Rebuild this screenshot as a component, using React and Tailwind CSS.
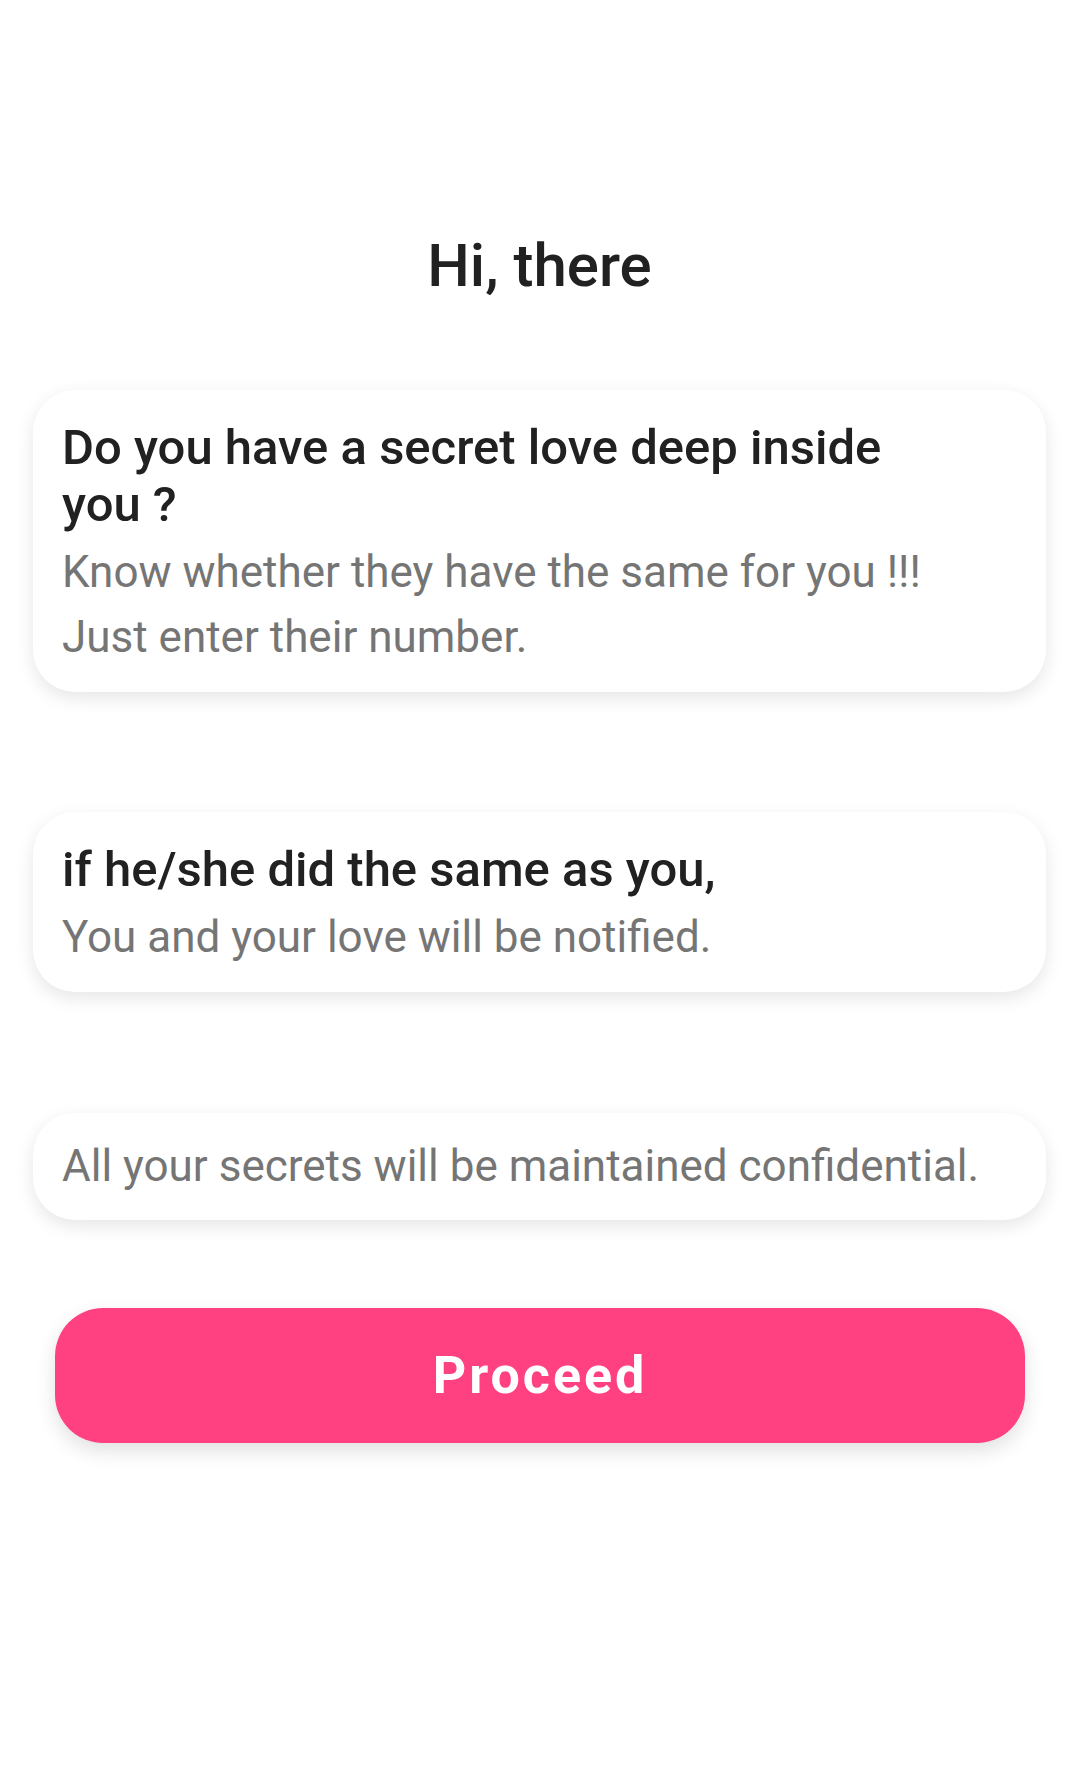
import React from "react";

const cards = [
  {
    title: "Do you have a secret love deep inside you ?",
    lines: ["Know whether they have the same for you !!!", "Just enter their number."],
  },
  {
    title: "if he/she did the same as you,",
    lines: ["You and your love will be notified."],
  },
];

function InfoCard({ title, lines }) {
  return (
    <div className="rounded-[42px] bg-white pl-[29px] pr-[100px] pt-[29px] pb-[22px] shadow-[0_6px_18px_rgba(0,0,0,0.10)]">
      <h2 className="text-[49px] leading-[57px] font-medium text-[#212121]">{title}</h2>
      <div className="mt-[7px]">
        {lines.map((line) => (
          <p key={line} className="text-[44px] leading-[65px] text-[#757575]">
            {line}
          </p>
        ))}
      </div>
    </div>
  );
}

export default function App() {
  return (
    <div className="min-h-[1765px] bg-white pl-[33px] pr-[27px] font-['Roboto',sans-serif]">
      <h1 className="pt-[230px] text-center text-[60px] leading-[72px] font-medium text-[#212121]">
        Hi, there
      </h1>

      <div className="mt-[88px]">
        <InfoCard {...cards[0]} />
      </div>
      <div className="mt-[120px]">
        <InfoCard {...cards[1]} />
      </div>

      <div className="mt-[121px] rounded-[42px] bg-white px-[29px] py-[21px] shadow-[0_6px_18px_rgba(0,0,0,0.10)]">
        <p className="text-[44px] leading-[65px] text-[#757575]">
          All your secrets will be maintained confidential.
        </p>
      </div>

      <div className="mt-[88px] pl-[22px] pr-[21px]">
        <button className="flex h-[135px] w-full items-center justify-center rounded-[48px] bg-[#ff4081] shadow-[0_8px_20px_rgba(0,0,0,0.12)]">
          <span className="text-[52px] font-bold tracking-[3px] text-white">Proceed</span>
        </button>
      </div>
    </div>
  );
}
